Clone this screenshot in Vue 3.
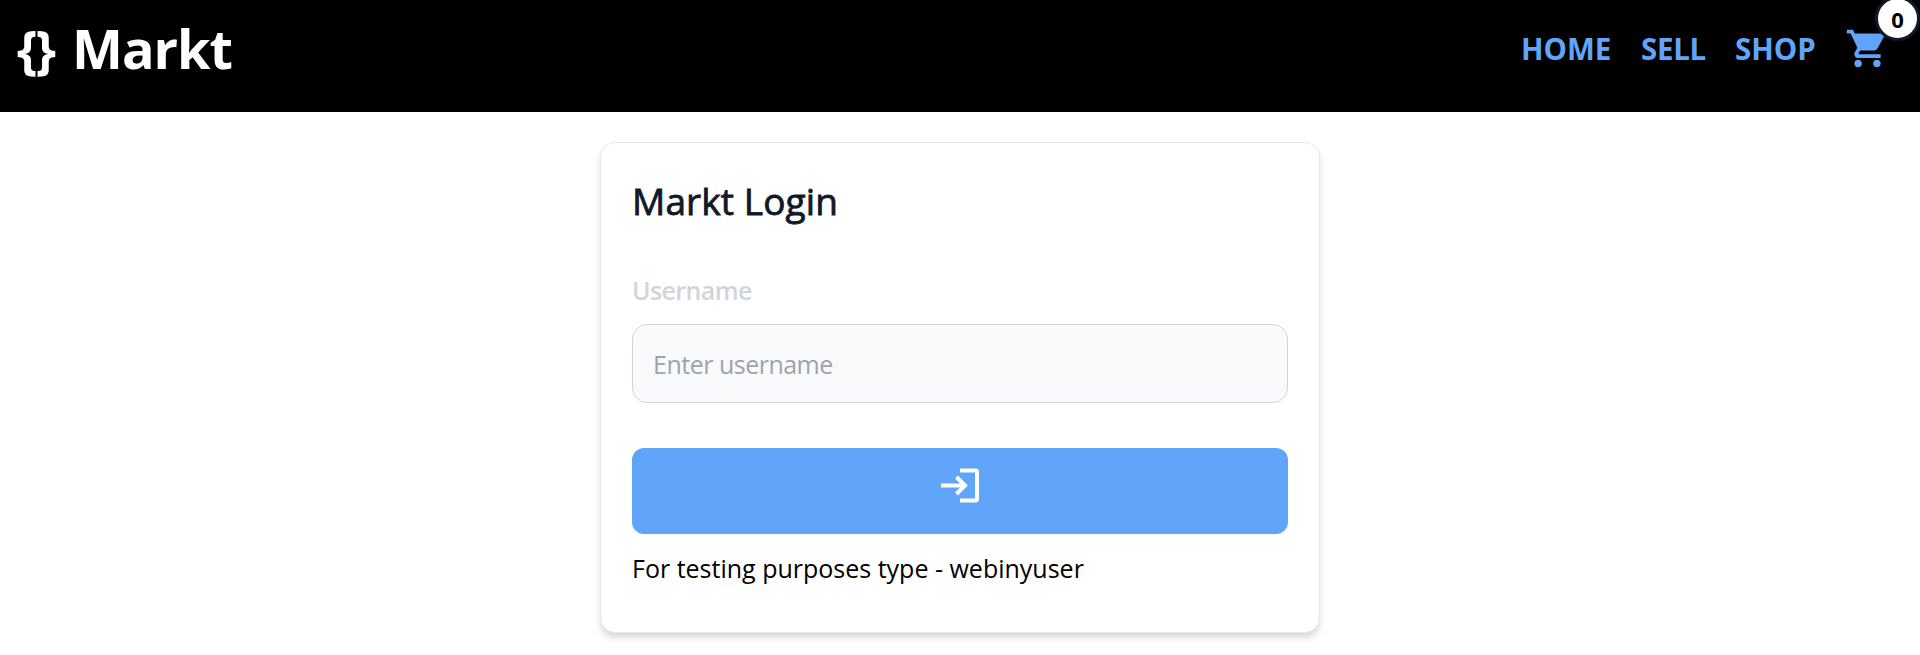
<script setup>
import { ref } from 'vue'

const links = ['HOME', 'SELL', 'SHOP']
const cartCount = ref(0)
const username = ref('')
</script>

<template>
  <div class="page">
    <header class="bar">
      <a class="brand"><span class="braces">{}</span><span class="name">Markt</span></a>
      <nav class="nav">
        <a v-for="link in links" :key="link" class="link" :class="link.toLowerCase()">{{ link }}</a>
        <a class="cart">
          <svg class="cart-icon" viewBox="0 0 24 24" fill="currentColor">
            <path d="M7 18c-1.100 0-1.990.9-1.990 2S5.900 22 7 22s2-.9 2-2-.9-2-2-2zM1 2v2h2l3.600 7.590-1.350 2.450c-.16.28-.25.61-.25.96 0 1.100.9 2 2 2h12v-2H7.420c-.14 0-.25-.11-.25-.25l.03-.12.9-1.630h7.450c.75 0 1.410-.41 1.750-1.030l3.580-6.490A1 1 0 0 0 20 4H5.210l-.94-2H1zm16 16c-1.100 0-1.990.9-1.990 2s.89 2 1.990 2 2-.9 2-2-.9-2-2-2z" />
          </svg>
          <span class="badge">{{ cartCount }}</span>
        </a>
      </nav>
    </header>
    <main class="content">
      <form class="card" @submit.prevent>
        <h1 class="title">Markt Login</h1>
        <label class="label" for="username">Username</label>
        <input id="username" v-model="username" class="field" type="text" placeholder="Enter username" />
        <button class="submit" type="submit" aria-label="Log in">
          <svg class="login-icon" viewBox="0 0 38 36" fill="none" stroke="currentColor" stroke-width="4">
            <path d="M19 2.500H34.500Q36 2.500 36 4V31Q36 32.500 34.500 32.500H19" />
            <path d="M0 17.500H24M15.500 9L24 17.500L15.500 26" />
          </svg>
        </button>
        <p class="hint">For testing purposes type - webinyuser</p>
      </form>
    </main>
  </div>
</template>

<style>
body {
  margin: 0;
  background: #fff;
}
</style>

<style scoped>
.page {
  height: 655px;
  overflow: hidden;
  font-family: 'Segoe UI', 'Open Sans', 'Noto Sans', sans-serif;
}
.bar {
  box-sizing: border-box;
  height: 112px;
  padding: 0 30px 0 17px;
  display: flex;
  justify-content: space-between;
  align-items: flex-start;
  background: #000;
}
.brand {
  display: flex;
  padding-top: 9px;
  color: #fff;
  font-size: 54px;
  font-weight: 700;
  line-height: 78px;
}
.braces {
  width: 55px;
  font-size: 52px;
  letter-spacing: -2px;
}
.name {
  letter-spacing: -1px;
}
.nav {
  display: flex;
  padding-top: 26px;
  color: #60a5fa;
}
.link {
  font-size: 29.5px;
  font-weight: 700;
  line-height: 46px;
  white-space: nowrap;
}
.home {
  width: 120px;
}
.sell {
  width: 94px;
  letter-spacing: -0.3px;
}
.shop {
  width: 110px;
}
.cart {
  position: relative;
  width: 45px;
  height: 45px;
}
.cart-icon {
  display: block;
  width: 45px;
  height: 45px;
}
.badge {
  position: absolute;
  top: -30px;
  right: -30px;
  box-sizing: border-box;
  width: 45px;
  height: 45px;
  border: 3px solid #111827;
  border-radius: 50%;
  background: #fff;
  color: #000;
  font-size: 22px;
  font-weight: 700;
  line-height: 40px;
  text-align: center;
}
.content {
  display: flex;
  justify-content: center;
  padding-top: 30px;
}
.card {
  box-sizing: border-box;
  width: 720px;
  height: 491px;
  padding: 31px;
  border: 1px solid #e5e7eb;
  border-radius: 15px;
  background: #fff;
  box-shadow: 0 6px 10px -1px rgba(0, 0, 0, 0.1), 0 4px 7px -2px rgba(0, 0, 0, 0.1);
}
.title {
  margin: 0;
  color: #111827;
  font-size: 37px;
  font-weight: 500;
  line-height: 54px;
  letter-spacing: 0.1px;
  -webkit-text-stroke: 0.8px #111827;
}
.label {
  display: block;
  margin-top: 42px;
  color: #d1d5db;
  font-size: 25px;
  font-weight: 600;
  line-height: 40px;
  letter-spacing: -0.6px;
}
.field {
  display: block;
  box-sizing: border-box;
  width: 100%;
  height: 79px;
  margin: 14px 0 0;
  padding: 0 20px;
  border: 1px solid #d1d5db;
  border-radius: 15px;
  outline: none;
  background: #f9fafb;
  color: #111827;
  font-family: inherit;
  font-size: 25px;
  letter-spacing: -0.5px;
}
.field::placeholder {
  color: #9ca3af;
  opacity: 1;
}
.submit {
  display: flex;
  justify-content: center;
  align-items: flex-start;
  width: 100%;
  height: 86px;
  margin: 45px 0 0;
  padding: 20px 0 0;
  border: 0;
  border-radius: 12px;
  background: #60a5fa;
  color: #fff;
}
.login-icon {
  width: 38px;
  height: 36px;
}
.hint {
  margin: 14px 0 0;
  color: #000;
  font-size: 25px;
  line-height: 40px;
  white-space: nowrap;
}
</style>
